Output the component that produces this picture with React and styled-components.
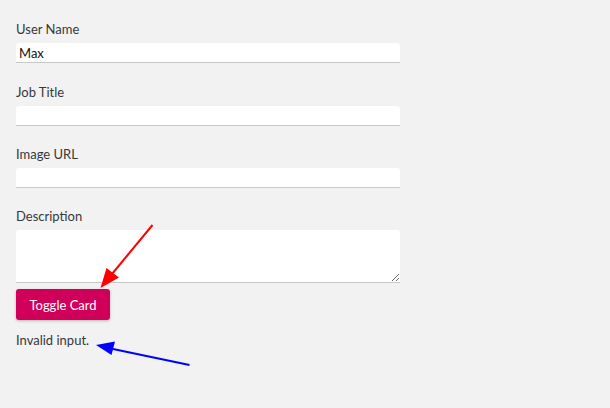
import React from "react";
import styled, { createGlobalStyle } from "styled-components";

const Global = createGlobalStyle`
  html, body { margin: 0; padding: 0; background: #f2f2f2; }
  body { font-family: Lato, "Noto Sans", sans-serif; }
  * { box-sizing: border-box; }
`;

const Page = styled.div`
  position: relative;
  width: 610px;
  height: 408px;
  padding: 21.3px 16px 0 16px;
  background: #f2f2f2;
`;

const Form = styled.form`
  display: flex;
  flex-direction: column;
  width: 384px;
`;

const Field = styled.div`
  display: flex;
  flex-direction: column;
  margin-bottom: ${(p) => (p.$last ? "6px" : "20.33px")};
`;

const Label = styled.label`
  font-size: 13px;
  line-height: 16px;
  color: #383838;
  margin-bottom: 6px;
`;

const Input = styled.input`
  width: 384px;
  height: 20px;
  border: none;
  border-bottom: 1px solid #c8c8c8;
  border-radius: 3px 3px 0 0;
  background: #fff;
  padding: 0 3px;
  font-family: Lato, sans-serif;
  font-size: 13px;
  color: #111;
  outline: none;
`;

const TextArea = styled.textarea`
  width: 384px;
  height: 53px;
  border: none;
  border-bottom: 1px solid #c8c8c8;
  border-radius: 3px 3px 0 0;
  background: #fff;
  padding: 2px 3px;
  font-family: Lato, sans-serif;
  font-size: 13px;
  color: #111;
  outline: none;
  display: block;
`;

const Button = styled.button`
  align-self: flex-start;
  height: 31px;
  width: 94px;
  padding: 0;
  border: none;
  border-radius: 3px;
  background: #d0005a;
  color: #fff;
  font-family: Lato, sans-serif;
  font-size: 13px;
  box-shadow: 0 1px 3px rgba(0, 0, 0, 0.25);
  cursor: pointer;
`;

const Message = styled.p`
  margin: 12px 0 0 0;
  font-size: 13px;
  line-height: 16px;
  color: #383838;
`;

const Overlay = styled.svg`
  position: absolute;
  left: 0;
  top: 0;
  pointer-events: none;
`;

export default function App() {
  return (
    <>
      <Global />
      <Page>
        <Form onSubmit={(e) => e.preventDefault()}>
          <Field>
            <Label>User Name</Label>
            <Input defaultValue="Max" />
          </Field>
          <Field>
            <Label>Job Title</Label>
            <Input />
          </Field>
          <Field>
            <Label>Image URL</Label>
            <Input />
          </Field>
          <Field $last>
            <Label>Description</Label>
            <TextArea />
          </Field>
          <Button type="button">Toggle Card</Button>
          <Message>Invalid input.</Message>
        </Form>
        <Overlay width="610" height="408" viewBox="0 0 610 408">
          <line x1="152.5" y1="225" x2="112" y2="274" stroke="#ff0000" strokeWidth="2" />
          <polygon points="100.5,288 106.5,268 119,277.5" fill="#ff0000" />
          <line x1="189.5" y1="365" x2="113" y2="349" stroke="#0000ff" strokeWidth="2" />
          <polygon points="96,345 115,341.5 111.5,355" fill="#0000ff" />
        </Overlay>
      </Page>
    </>
  );
}
